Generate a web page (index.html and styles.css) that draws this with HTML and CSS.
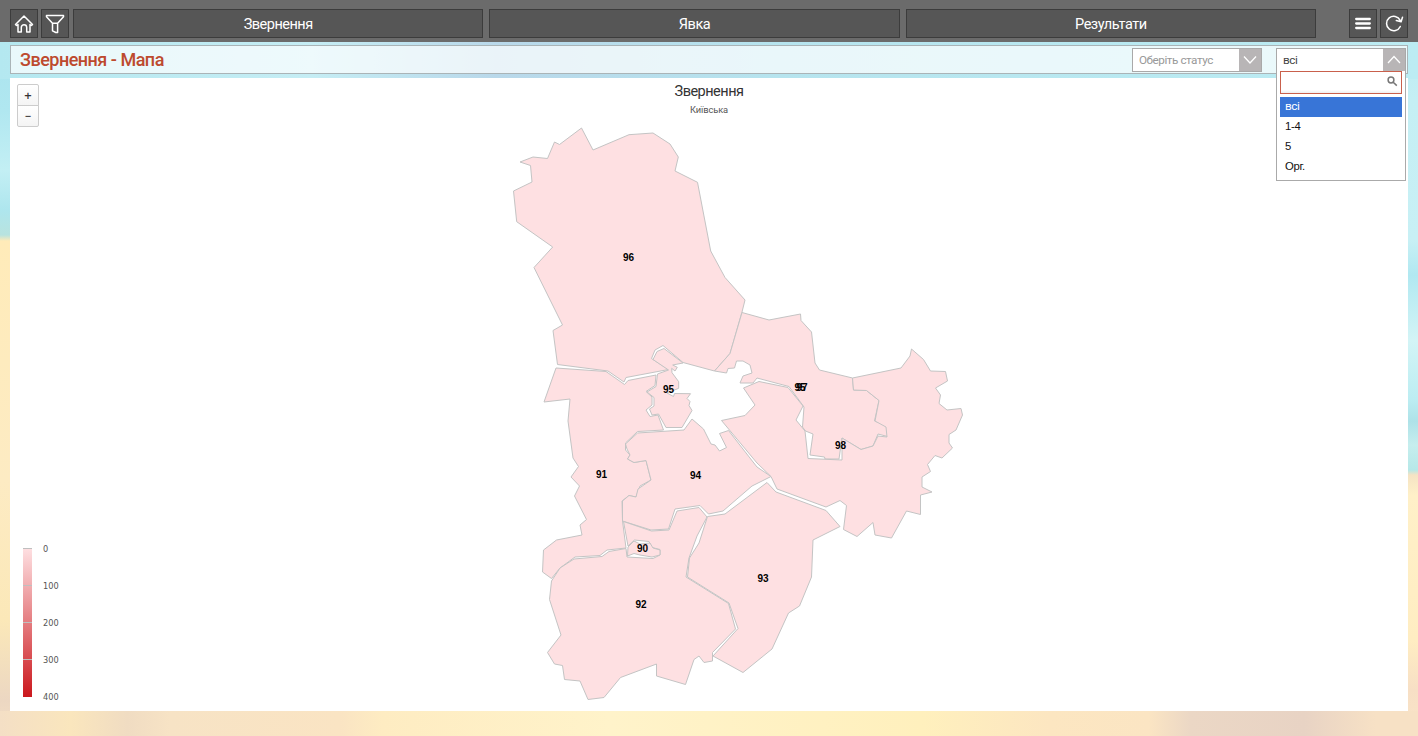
FILE: index.html
```html
<!DOCTYPE html>
<html lang="uk">
<head>
<meta charset="utf-8">
<title>Звернення - Мапа</title>
<link rel="stylesheet" href="styles.css">
</head>
<body>
<header class="topbar">
  <button class="icon-btn" aria-label="Додому"><svg width="20" height="20" viewBox="0 0 20 20"><path d="M1.500 10.500 10 2l8.500 8.500-1 1-1.500-1V18h-3.300v-4.500a2.700 2.700 0 0 0-5.400 0V18H4v-7.500l-1.500 1z"/></svg></button>
  <button class="icon-btn" aria-label="Фільтр"><svg width="20" height="20" viewBox="0 0 20 20"><path d="M1.500 1.500h17v1.200l-5.900 6.600V18.500h-1.800l-3.300-1.700V9.300L1.500 2.700zM7.500 9.300h5"/></svg></button>
  <nav class="tabs">
    <a class="tab">Звернення</a><a class="tab">Явка</a><a class="tab">Результати</a>
  </nav>
  <button class="icon-btn" aria-label="Меню"><svg width="20" height="20" viewBox="0 0 20 20"><path class="bars" d="M3.200 5h13.600M3.200 9.500h13.600M3.200 14h13.600"/></svg></button>
  <button class="icon-btn" aria-label="Оновити"><svg width="20" height="20" viewBox="0 0 20 20"><path d="M16.300 12.500A7.200 7.200 0 1 1 16.200 6.300M12.300 6.600l4.800 1.200 1.400-4.500"/></svg></button>
</header>

<section class="titlebar">
  <h1>Звернення - Мапа</h1>
  <div class="select status"><span>Оберіть статус</span><i><svg width="16" height="12" viewBox="0 0 16 12"><path d="M2 2.500l6 6.500 6-6.500"/></svg></i></div>
  <div class="select type"><span>всі</span><i><svg width="16" height="12" viewBox="0 0 16 12"><path d="M2 9l6-6.500L14 9"/></svg></i>
    <div class="dropdown">
      <div class="search"><svg width="11" height="11" viewBox="0 0 11 11"><circle cx="4" cy="4" r="2.900"/><path d="M6.200 6.200l3.600 3.400"/></svg></div>
      <ul><li class="active">всі</li><li>1-4</li><li>5</li><li>Орг.</li></ul>
    </div>
  </div>
</section>

<main class="panel">
  <svg class="map" width="1398" height="633" viewBox="10 78 1398 633">
    <text class="map-title" x="709" y="96">Звернення</text>
    <text class="map-sub" x="709" y="113">Київська</text>
    <g class="regions">
      <path d="M581.500 128 593 150 629 134.700 653 133 670 144 678.300 157 675 171 697.500 182.300 710.700 251 725 277.500 745 300 742 312 730 353.500 714.500 371 683 362.500 663 345.500 655 350 651.500 358.500 668.500 369.500 626 377.500 624 382 608 371 557.500 364.500 553 330.500 562.500 325 534 267.500 552.700 247 516.700 221.700 513.500 191 532 182 530.500 165.500 520 162 533 157 547.500 158.500 554.500 142 559.500 144.500z"/>
      <path d="M556 368 606 371.500 624.500 384.500 628 380.500 656 375 655 385.500 646 391.500 652 397 652 405 646 410 650 416.500 658 415 663.500 430 637.500 431.500 625.500 443 625.500 450 630 455 627.500 459 634 462.500 646 460.500 651 480 640 486 636 497 629 495.500 622 501 622.500 521 626 548 607 550 600 555.500 575 557 560 568 551.500 578.500 542.500 572 543.500 550 556.500 540 582 535 580 525 586.500 519.500 574.500 496 579.500 486 571 477 578.500 466.500 573 458 568 421 570 399 544 402z"/>
      <path d="M668.500 370 653 359.500 657 351.500 664 348.500 683 363 672.700 365 677.300 367.300 675 371 671.700 368.300 672 372.700 678.700 381.700 678.700 388.300 667 393 673.500 396.500 674.500 393.500 690.500 393.700 687 398.500 690 401.500 689 405.500 692 410.500 682 427.500 666 427.500 658.500 414 652 415 649.500 409 654 406 654 397.500 647 392 656 386.500 657.500 374z"/>
      <path d="M637.500 433 684 430 692 419 703.500 429 711 444 715 445 719.500 451 726.500 447.500 719.500 433.500 728.500 430.500 757 467 771 476.500 752 486 723 511 708.500 514 700 505.500 675 509 668.500 529 651 530 622.500 521 622.500 501 629 495.500 636 497 638 489 651 480 646 460.500 634 462.500 627.500 459 630 455 627 449 625.500 444z"/>
      <path d="M623.500 521.500 651.500 531 669 530 677 511 699 507.500 707 517 697 536 689 558 686 577 728.500 603.500 735.500 629 712.500 652.500 712.500 661 704 662.500 699 656 694 659.500 685.500 684.500 656.500 676 656.500 664 620.500 677.500 604 697.500 588 699.500 580 681 564.500 679.500 562.500 665.500 554.500 664 547.500 652.500 561 635 549.500 599.500 551.500 581 560 568 574 559 602 556.500 609 551.500 626 548.500 627 557 653 558.500 660 555 660 549.500 652 547.500 649 541.500 634.500 540 628 546z"/>
      <path d="M628 547 634 541 640 544 650 543 653 548 660 550 660 555 652 557 640 555 634 553.500 627.500 556z"/>
      <path d="M767 482.500 776 492 826 510.500 840 526.500 813 540 811.500 577 799.500 606 788.500 613 772 649 743 672.500 713 656 738 628.500 729 603 687.500 577 689.500 558 699 543 707.500 516.500 725 514z"/>
      <path d="M742 312.500 769 320 800.500 314 801 320.500 811.500 332 815 363 819.500 370 852.500 378 853.500 390 866.500 390.500 879 400.500 874.500 421 888 426 889.500 437 878 434 873 446 861 449.500 842 438 839 459 825 459 824.500 457 810 455 813 434 805.500 431 802.500 427 804 407 789 386.500 757 378 753 383 740 383 743 376 752 373 750 365 743 361 736.500 361 734.500 368 728 368.500 726.500 373 714.500 371 730 353.500z"/>
      <path d="M852.500 378 901 368 910 356 911.500 349 923.500 359.500 930.500 371 945.500 371.500 947.500 381 935.500 388 940.500 395 939 403.500 947 410 961 408.500 962.500 415 956 430 949 434.500 949 443 952.500 448 942 458 935 455.500 927.500 464.500 930.500 471.500 922 477 922 487 932 492 920.500 495 920.500 514.500 906.500 511 891.500 538 875 535 873 522.500 857 536.500 843.500 529.500 846.500 505.500 840 500.500 826 507 777 489 771 476.500 757 463 721.500 420.500 745 415.500 755 405 743.500 388 759 381.500 788 387.500 803 406 796 420 805 431 808 458.500 842 460 842 438 861 449.500 873 446 878 436 887 437 886 427 875 421 879 400.500 866.500 390.500 853.500 390z"/>
    </g>
    <g class="labels">
      <text x="628.500" y="260.500">96</text><text x="668.500" y="393">95</text><text x="800" y="391">95</text><text x="802" y="391">97</text>
      <text x="840.500" y="448.500">98</text><text x="601.500" y="478.300">91</text><text x="695.500" y="479">94</text>
      <text x="642.500" y="552.300">90</text><text x="763" y="582.300">93</text><text x="641" y="608.300">92</text>
    </g>
  </svg>
  <div class="zoom"><button>+</button><button>−</button></div>
  <div class="legend">
    <div class="scale"><b></b><b></b><b></b><b></b></div>
    <div class="ticks"><span>0</span><span>100</span><span>200</span><span>300</span><span>400</span></div>
  </div>
</main>
</body>
</html>
```
FILE: styles.css
```css
* { box-sizing: border-box; }
html { height: 100%; }
body {
  margin: 0; height: 736px; overflow: hidden;
  font-family: Roboto, "Liberation Sans", sans-serif;
  background:
    linear-gradient(90deg, #f4dfc5 0, #fae6bd 5%, #f0dcc2 9%, #f7e3c5 12%, #fae4c3 24%, #feecc2 27%, #fff3ca 43%, #fff0bd 65%, #fce6c1 74%, #fbe5c3 81%, #ebd7c5 84%, #e8d3c4 92%, #f7e1c5 97%) 0 711px / 100% 25px no-repeat,
    linear-gradient(90deg, #b4e8f0 0, #c5edf4 22%, #b9d8ea 35%, #b6e4ee 55%, #b9e9f1 80%, #bcecf3 100%) 0 42px / 100% 37px no-repeat,
    linear-gradient(#a7e2ed 0, #b0e7f0 110px, #c3eff4 170px, #aee6ee 210px, #b8e3df 235px, #ffebb9 241px, #fdebc3 480px, #fbe8b8 620px, #ecd7c2 700px, #f4dfc5) 0 0 / 50% 100% no-repeat,
    linear-gradient(#b5e9f1 0, #c5eff4 100px, #c8f0f5 240px, #b1e8f1 275px, #d3f4f6 340px, #bcedf2 400px, #aee2e8 421px, #c6eeee 445px, #b6e8e8 470px, #f5e3c4 475px, #fff0c8 495px, #ffedc2 640px, #f7dfc5 690px, #fae5c8) 100% 0 / 50% 100% no-repeat;
}
button { padding: 0; font: inherit; }
.topbar { display: flex; gap: 3px; height: 42px; padding: 9px 10px 4px; background: #6b6b6b; }
.icon-btn, .tab { background: #565656; border: 1px solid #3c3c3c; color: #fff; }
.icon-btn { width: 28px; height: 29px; display: flex; align-items: center; justify-content: center; }
.icon-btn svg { flex: none; fill: none; stroke: #fff; stroke-width: 1.5; stroke-linejoin: round; stroke-linecap: round; }
.icon-btn .bars { stroke-width: 2.3; }
.tabs { flex: 1; display: grid; grid-template-columns: repeat(3, 1fr); gap: 6px; margin: 0 30px 0 1px; }
.tab { height: 29px; line-height: 29px; text-align: center; font-size: 14.5px; letter-spacing: -.5px; }
.titlebar { display: flex; align-items: flex-start; height: 29px; margin: 3px 10px 0; padding: 2px 1px 0 9px; border: 1px solid #aab4b7; background: rgba(255,255,255,.7); }
h1 { flex: 1; margin: 0; font-size: 18px; letter-spacing: -.5px; font-weight: 500; line-height: 24px; color: #bd4a2e; }
.select { position: relative; display: flex; height: 24px; background: #fff; border: 1px solid #a9a9a9; font-size: 11.7px; letter-spacing: -.45px; line-height: 22px; color: #444; }
.select > span { flex: 1; padding-left: 6px; }
.select > i { width: 22px; display: flex; align-items: center; justify-content: center; background: #b8b5b6; }
.select i svg { fill: none; stroke: #fff; stroke-width: 1.3; }
.status { width: 130px; margin-right: 14px; color: #999; }
.type { width: 130px; }
.dropdown { position: absolute; z-index: 2; left: -1px; top: 22px; width: 130px; height: 110px; padding: 0 3px; background: #fff; border: 1px solid #aaa; border-top: 0; }
.search { height: 23px; border: 1px solid #c9604c; background: linear-gradient(#fff 85%, #eee); display: flex; justify-content: flex-end; padding: 4px 3px; }
.search svg { fill: none; stroke: #777; stroke-width: 1.5; }
ul { list-style: none; margin: 3px 0 0; padding: 0; }
li { height: 20px; line-height: 19px; padding-left: 5px; color: #111; }
li:not(.active) { font-family: "Liberation Sans", sans-serif; font-size: 11.3px; letter-spacing: -.3px; }
li.active { color: #fff; background: #3875d7; }
.panel { position: relative; height: 633px; margin: 4px 10px 0; background: #fff; }
.map { display: block; }
.regions path { fill: #fee0e2; stroke: #c4c4c4; stroke-width: 1; stroke-linejoin: round; }
.map text { text-anchor: middle; }
.map-title { font-size: 14.5px; letter-spacing: -.5px; fill: #333; }
.map-sub { font-size: 9.3px; letter-spacing: -.1px; fill: #555; }
.labels { font: bold 10px "Liberation Sans", sans-serif; fill: #000; }
.zoom { position: absolute; left: 7px; top: 6px; width: 22px; }
.zoom button { display: block; width: 22px; height: 22px; border: 1px solid #ccc; background: linear-gradient(#fff, #f4f4f4); font: 600 13px/20px "Open Sans", sans-serif; color: #333; border-radius: 2px 2px 0 0; }
.zoom button + button { margin-top: -1px; font-size: 11px; border-radius: 0 0 2px 2px; }
.legend { position: absolute; left: 13px; top: 470px; display: flex; gap: 11px; }
.scale { width: 9px; height: 149px; background: linear-gradient(#fee0e2, #cb181d); display: grid; grid-template-rows: repeat(4, 37px); }
.scale b { border-top: 1px solid #bfbfbf; }
.ticks { display: grid; grid-template-rows: repeat(5, 37px); font: 8.2px/10px "DejaVu Sans", sans-serif; color: #555; margin-top: -4px; }
```
